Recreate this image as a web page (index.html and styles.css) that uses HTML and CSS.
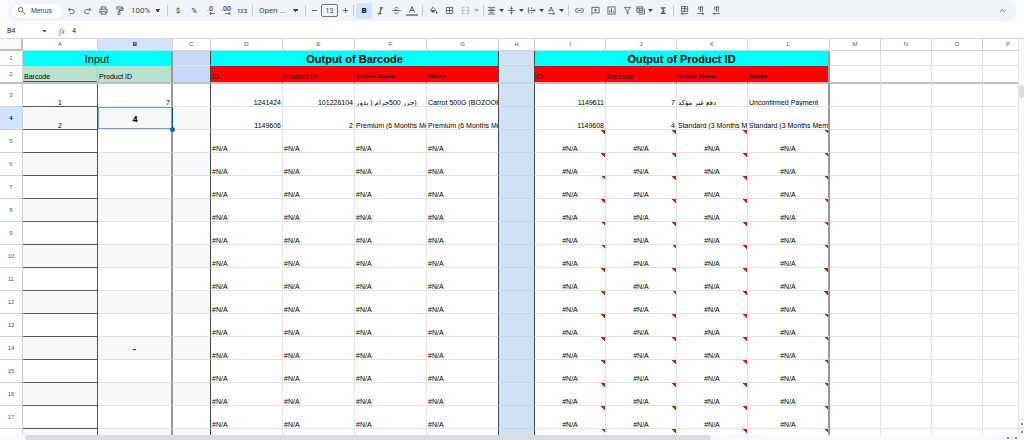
FILE: index.html
```html
<!DOCTYPE html>
<html lang="en">
<head>
    <meta charset="UTF-8">
    <meta name="viewport" content="width=device-width, initial-scale=1.0">
    <title>Barcode / Product ID Lookup</title>
    <link rel="stylesheet" href="styles.css">
</head>
<body>

<div class="toolbar-wrap">
    <div class="toolbar">
        <button class="menus-btn">
            <svg class="icon" viewBox="0 0 20 20"><circle cx="8" cy="8" r="5"/><path d="M12 12l6 6"/></svg>
            Menus
        </button>
        <button class="tool" aria-label="Undo"><svg class="icon" viewBox="0 0 20 20"><path d="M7 4L3 8l4 4M3 8h9a4 4 0 0 1 0 9H6"/></svg></button>
        <button class="tool" aria-label="Redo"><svg class="icon" viewBox="0 0 20 20"><path d="M13 4l4 4-4 4M17 8H8a4 4 0 0 0 0 9h6"/></svg></button>
        <button class="tool" aria-label="Print"><svg class="icon" viewBox="0 0 20 20"><path d="M5 7V2h10v5M5 15H2V7h16v8h-3M5 12h10v6H5z"/></svg></button>
        <button class="tool" aria-label="Paint format"><svg class="icon" viewBox="0 0 20 20"><path d="M4 2h11v5H4zM15 4h3v6H9v3M7 13h4v6H7z"/></svg></button>
        <select class="tool-select zoom-select" aria-label="Zoom"><option>100%</option></select>
        <span class="sep"></span>
        <button class="tool" aria-label="Currency">$</button>
        <button class="tool" aria-label="Percent">%</button>
        <button class="tool decimal" aria-label="Decrease decimal places">.0<svg class="arrow" viewBox="0 0 8 4"><path d="M8 2H1M3 0L1 2l2 2"/></svg></button>
        <button class="tool decimal" aria-label="Increase decimal places">.00<svg class="arrow" viewBox="0 0 8 4"><path d="M0 2h7M5 0l2 2-2 2"/></svg></button>
        <button class="tool small" aria-label="More formats">123</button>
        <span class="sep"></span>
        <select class="tool-select font-select" aria-label="Font"><option>Open ...</option></select>
        <span class="sep"></span>
        <button class="step" aria-label="Decrease font size"><svg class="icon" viewBox="0 0 20 20"><path d="M4 10h12"/></svg></button>
        <input class="size-input" type="text" value="13" aria-label="Font size">
        <button class="step" aria-label="Increase font size"><svg class="icon" viewBox="0 0 20 20"><path d="M4 10h12M10 4v12"/></svg></button>
        <span class="sep"></span>
        <button class="tool bold active" aria-label="Bold">B</button>
        <button class="tool" aria-label="Italic"><svg class="icon" viewBox="0 0 20 20"><path class="heavy" d="M8 4h8M4 17h8M12 4L8 17"/></svg></button>
        <button class="tool" aria-label="Strikethrough"><svg class="icon" viewBox="0 0 20 20"><path d="M1 10h18M14 6c0-4-8-4-8-1 0 2 2 3 4 3M6 14c0 4 8 4 8 0"/></svg></button>
        <button class="tool" aria-label="Text color"><svg class="icon text-color" viewBox="0 0 24 20"><path d="M7 13L12 1l5 12M9 9h6"/><path class="bar" d="M0 18h24"/></svg></button>
        <span class="sep"></span>
        <button class="tool" aria-label="Fill color"><svg class="icon" viewBox="0 0 20 20"><path d="M7 1l8 8-6 6-6-6 6-6"/><path class="solid" d="M4 9h10l-5 5zM17 11c3 4 2 6 0 6s-3-2 0-6z"/></svg></button>
        <button class="tool" aria-label="Borders"><svg class="icon" viewBox="0 0 20 20"><path d="M3 3h14v14H3zM10 3v14M3 10h14"/></svg></button>
        <button class="drop wide" aria-label="Merge cells" disabled><svg class="icon" viewBox="0 0 20 20"><path d="M8 3H3v4M12 3h5v4M8 17H3v-4M12 17h5v-4M1 10h6M5 8l2 2-2 2M19 10h-6M15 8l-2 2 2 2"/></svg><i class="caret"></i></button>
        <span class="sep"></span>
        <button class="drop" aria-label="Horizontal align"><svg class="icon" viewBox="0 0 20 20"><path d="M2 3h16M5 7h10M2 10h16M5 14h10M2 18h16"/></svg><i class="caret"></i></button>
        <button class="drop" aria-label="Vertical align"><svg class="icon" viewBox="0 0 20 20"><path d="M2 10h16M10 1v6M7 5l3 3 3-3M10 19v-6M7 15l3-3 3 3"/></svg><i class="caret"></i></button>
        <button class="drop" aria-label="Text wrapping"><svg class="icon" viewBox="0 0 20 20"><path d="M3 3v14M10 3v4M10 13v4M5 10h13M15 7l3 3-3 3"/></svg><i class="caret"></i></button>
        <button class="drop" aria-label="Text rotation"><svg class="icon" viewBox="0 0 20 20"><path d="M4 13L9 2l5 11M6 9h6M2 17h15M14 14l3 3-3 3"/></svg><i class="caret"></i></button>
        <span class="sep"></span>
        <button class="tool" aria-label="Insert link"><svg class="icon" viewBox="0 0 20 20"><path d="M8 6H5a4 4 0 0 0 0 8h3M12 6h3a4 4 0 0 1 0 8h-3M6 10h8"/></svg></button>
        <button class="tool" aria-label="Insert comment"><svg class="icon" viewBox="0 0 20 20"><path d="M2 3h16v12H6l-4 4zM10 6v6M7 9h6"/></svg></button>
        <button class="tool" aria-label="Insert chart"><svg class="icon" viewBox="0 0 20 20"><path d="M2 2h16v16H2zM6 9v6M10 5v10M14 11v4"/></svg></button>
        <button class="tool" aria-label="Create a filter"><svg class="icon" viewBox="0 0 20 20"><path d="M3 3h14l-6 7v7H9v-7z"/></svg></button>
        <button class="drop" aria-label="Filter views"><svg class="icon" viewBox="0 0 20 20"><path d="M2 2h13v12H2zM2 6h13M7 6v8M7 10h8M6 18h13V6"/></svg><i class="caret"></i></button>
        <button class="tool" aria-label="Functions"><svg class="icon" viewBox="0 0 20 20"><path class="heavy" d="M15 4H6l5 6-5 6h9"/></svg></button>
        <span class="sep"></span>
        <button class="tool" aria-label="Sheet direction"><svg class="icon" viewBox="0 0 20 20"><path d="M3 1h14v11H3zM10 1v11M3 6h14M18 17H3M6 14l-3 3 3 3"/></svg></button>
        <button class="tool" aria-label="Left to right"><svg class="icon" viewBox="0 0 20 20"><path d="M16 2H8a3 3 0 0 0 0 6h2M10 2v11M14 2v11M2 17h15M14 14l3 3-3 3"/></svg></button>
        <button class="tool" aria-label="Right to left"><svg class="icon" viewBox="0 0 20 20"><path d="M16 2H8a3 3 0 0 0 0 6h2M10 2v11M14 2v11M18 17H3M6 14l-3 3 3 3"/></svg></button>
        <button class="tool collapse" aria-label="Hide the menus"><svg class="icon" viewBox="0 0 20 20"><path d="M5 13l5-5 5 5"/></svg></button>
    </div>
</div>

<div class="formula-bar">
    <input class="name-box" type="text" value="B4" aria-label="Name box">
    <i class="caret"></i>
    <label class="fx" for="formula">fx</label>
    <input class="formula" id="formula" type="text" value="4">
</div>

<div class="main">
    <div class="sheet">
        <table id="sheetTable">
            <colgroup>
                <col class="w-head"><col class="w-a"><col class="w-b"><col class="w-c">
                <col class="w-out"><col class="w-out"><col class="w-out"><col class="w-out">
                <col class="w-h">
                <col class="w-prod"><col class="w-prod"><col class="w-prod"><col class="w-l">
                <col class="w-rest"><col class="w-rest"><col class="w-rest"><col class="w-rest">
            </colgroup>
            <thead>
                <tr>
                    <th class="corner"></th>
                    <th>A</th><th class="selected">B</th><th>C</th><th>D</th><th>E</th><th>F</th><th>G</th><th>H</th>
                    <th>I</th><th>J</th><th>K</th><th>L</th><th>M</th><th>N</th><th>O</th><th>P</th>
                </tr>
            </thead>
            <tbody>
                <tr class="title-row">
                    <th>1</th>
                    <td class="title thick-right" colspan="2">Input</td>
                    <td class="blue dark-right"></td>
                    <td class="title strong dark-right" colspan="4">Output of Barcode</td>
                    <td class="col-h"></td>
                    <td class="title strong thick-right" colspan="4">Output of Product ID</td>
                    <td></td><td></td><td></td><td></td>
                </tr>
                <tr class="label-row">
                    <th>2</th>
                    <td class="green underline">Barcode</td>
                    <td class="green thick-right">Product ID</td>
                    <td class="blue dark-right"></td>
                    <td class="red">ID</td>
                    <td class="red">Product ID</td>
                    <td class="red name">Arabic Name</td>
                    <td class="red name dark-right">Name</td>
                    <td class="col-h"></td>
                    <td class="red">ID</td>
                    <td class="red">Barcode</td>
                    <td class="red name">Arabic Name</td>
                    <td class="red name thick-right">Name</td>
                    <td></td><td></td><td></td><td></td>
                </tr>
                <tr>
                    <th>3</th>
                    <td class="col-a">1</td>
                    <td class="num thick-right">7</td>
                    <td class="dark-right"></td>
                    <td class="num">1241424</td>
                    <td class="num">101226104</td>
                    <td class="arabic"><bdi>جزر 500جرام ( بذور</bdi>)</td>
                    <td class="dark-right">Carrot 500G (BOZOOR</td>
                    <td class="col-h"></td>
                    <td class="num">1149611</td>
                    <td class="num">7</td>
                    <td class="arabic">دفع غير مؤكد</td>
                    <td class="thick-right">Unconfirmed Payment</td>
                    <td></td><td></td><td></td><td></td>
                </tr>
                <tr class="banded">
                    <th class="selected">4</th>
                    <td class="col-a">2</td>
                    <td class="col-b active-cell">4<span class="fill-handle"></span></td>
                    <td class="dark-right"></td>
                    <td class="num">1149606</td>
                    <td class="num">2</td>
                    <td>Premium (6 Months Me</td>
                    <td class="dark-right">Premium (6 Months Me</td>
                    <td class="col-h"></td>
                    <td class="num">1149608</td>
                    <td class="num">4</td>
                    <td>Standard (3 Months Me</td>
                    <td class="thick-right">Standard (3 Months Memb</td>
                    <td></td><td></td><td></td><td></td>
                </tr>
            </tbody>
        </table>
    </div>
    <div class="v-scroll">
        <div class="v-thumb"></div>
        <div class="v-arrows"><span class="arrow-btn up"></span><span class="arrow-btn down"></span></div>
    </div>
</div>
<div class="h-scroll">
    <div class="h-thumb"></div>
    <div class="h-arrows"><span class="arrow-btn left"></span><span class="arrow-btn right"></span></div>
</div>

<script>
    // Rows without a match: every lookup column shows #N/A
    const tbody = document.querySelector("#sheetTable tbody");
    const inputB = { 14: "-" };

    for (let row = 5; row <= 18; row++) {
        // row 18 is only a sliver above the scrollbar
        const value = row < 18 ? "#N/A" : "";
        const tr = document.createElement("tr");
        if (row % 2 === 0) {
            tr.className = "banded";
        }
        let html = "<th>" + (row < 18 ? row : "") + "</th>";
        html += '<td class="col-a"></td>';
        html += '<td class="col-b thick-right">' + (inputB[row] || "") + "</td>";
        html += '<td class="dark-right"></td>';
        html += ("<td>" + value + "</td>").repeat(3);
        html += '<td class="dark-right">' + value + "</td>";
        html += '<td class="col-h"></td>';
        html += ('<td class="error">' + value + "</td>").repeat(3);
        html += '<td class="error thick-right">' + value + "</td>";
        html += "<td></td><td></td><td></td><td></td>";
        tr.innerHTML = html;
        tbody.appendChild(tr);
    }
</script>

</body>
</html>
```

FILE: styles.css
```css
* {
    box-sizing: border-box;
}

body {
    margin: 0;
    height: 100vh;
    display: flex;
    flex-direction: column;
    overflow: hidden;
    font-family: "Liberation Sans", Arial, sans-serif;
    font-size: 7px;
    color: #000;
    background: #fff;
}

button, input, select {
    font-family: Roboto, Arial, sans-serif;
    font-size: 7px;
    color: #444746;
    background: none;
    border: none;
    padding: 0;
    margin: 0;
    outline: none;
}

/* toolbar */
.toolbar-wrap {
    background: #f9fbfd;
    padding: 0 8px 3px;
}

.toolbar {
    display: flex;
    align-items: center;
    height: 21px;
    padding: 0 6px 0 4px;
    background: #f0f4f9;
    border-radius: 11px;
}

.menus-btn {
    display: flex;
    align-items: center;
    gap: 5px;
    width: 50px;
    height: 14px;
    padding-left: 5px;
    margin-right: 1px;
    background: #fff;
    border-radius: 7px;
}

.icon {
    display: block;
    flex: none;
    width: 9px;
    height: 9px;
    fill: none;
    stroke: #5a5d5c;
    stroke-width: 2;
}

.icon.text-color {
    width: 12px;
    height: 10px;
}

.icon .heavy {
    stroke-width: 3;
}

.icon .bar {
    stroke: #5f7390;
    stroke-width: 3;
}

.icon .solid {
    fill: #444746;
    stroke: none;
}

.tool {
    display: flex;
    flex: none;
    align-items: center;
    justify-content: center;
    width: 16px;
    height: 16px;
    border-radius: 2px;
    font-weight: 500;
}

.tool.active {
    background: #d3e3fd;
    color: #041e49;
}

.tool.bold {
    font-size: 8px;
    font-weight: 900;
}

.tool.small {
    font-size: 6px;
}

.decimal {
    flex-direction: column;
    line-height: 6px;
}

.arrow {
    width: 6px;
    height: 3px;
    align-self: flex-end;
    margin-right: 3px;
    fill: none;
    stroke: #444746;
}

.tool-select {
    appearance: none;
    flex: none;
    height: 14px;
    padding-left: 4px;
    font-size: 8px;
    background: linear-gradient(to bottom left, #444746 50%, transparent 50%) no-repeat, linear-gradient(to bottom right, #444746 50%, transparent 50%) no-repeat;
    background-size: 3px 3px;
    background-position: right 7px center, right 4px center;
}

.zoom-select {
    width: 38px;
}

.font-select {
    width: 48px;
}

.sep {
    flex: none;
    width: 1px;
    height: 11px;
    margin: 0 2px;
    background: #c7cad0;
}

.step {
    display: flex;
    align-items: center;
    justify-content: center;
    width: 12px;
    height: 16px;
}

.size-input {
    width: 17px;
    height: 13px;
    margin: 0 1px;
    border: 1px solid #747775;
    border-radius: 2px;
    text-align: center;
}

.drop {
    display: flex;
    flex: none;
    align-items: center;
    justify-content: space-between;
    width: 20px;
    height: 16px;
    padding: 0 2px 0 1px;
}

.drop.wide {
    width: 24px;
    padding-left: 4px;
}

.drop:disabled {
    opacity: 0.4;
}

.caret {
    flex: none;
    width: 5px;
    height: 3px;
    background: #444746;
    clip-path: polygon(0 0, 100% 0, 50% 100%);
}

.collapse {
    margin-left: auto;
}

/* formula bar */
.formula-bar {
    display: flex;
    align-items: center;
    height: 15px;
    padding-left: 7px;
    border-bottom: 1px solid #d5d7da;
}

.name-box {
    width: 35px;
    color: #202124;
}

.fx {
    width: 10px;
    margin: 0 3px 0 12px;
    font-family: "Liberation Serif", serif;
    font-size: 8px;
    font-style: italic;
    color: #5f6368;
}

.formula {
    flex: 1;
    color: #202124;
}

/* sheet */
.main {
    flex: 1;
    min-height: 0;
    display: flex;
}

.sheet {
    flex: 1;
    min-width: 0;
    overflow: hidden;
}

table {
    width: 1031px;
    table-layout: fixed;
    border-collapse: separate;
    border-spacing: 0;
}

.w-head { width: 23px; }
.w-a { width: 75px; }
.w-b { width: 75px; }
.w-c { width: 38px; }
.w-out { width: 72px; }
.w-h { width: 36px; }
.w-prod { width: 71px; }
.w-l { width: 82px; }
.w-rest { width: 51px; }

th, td {
    height: 23px;
    padding: 0 1px;
    border-right: 1px solid #e2e3e3;
    border-bottom: 1px solid #e2e3e3;
    line-height: 7px;
    white-space: nowrap;
    overflow: hidden;
}

td {
    text-align: left;
    vertical-align: bottom;
}

th {
    font-size: 6px;
    font-weight: normal;
    text-align: center;
    vertical-align: middle;
    color: #575b5f;
    border-color: #d0d3d6;
}

thead th {
    height: 12px;
}

th.corner {
    background: #f8f9fa;
    border-right: 2px solid #c0c0c0;
    border-bottom: 2px solid #c0c0c0;
}

th.selected {
    background: #d3e3fd;
    color: #041e49;
    font-weight: bold;
}

.title-row > * {
    height: 15px;
}

.title-row .title {
    padding-top: 2px;
    background: #00ffff;
    border-bottom-color: #00ffff;
    font-size: 11px;
    line-height: 12px;
    text-align: center;
    vertical-align: middle;
}

.title-row .strong {
    font-weight: bold;
}

/* frozen rows end here */
.label-row > * {
    height: 18px;
    border-bottom: 2px solid #c0c0c0;
}

.label-row td {
    padding-bottom: 2px;
}

.green {
    background: #b7e1cd;
    border-right-color: #a5d0bb;
}

.underline {
    box-shadow: inset 0 -1px #555;
}

.blue {
    background: #c9daf8;
}

.red {
    background: #ff0000;
    border-right-color: #e00000;
    color: #400000;
}

.red.name {
    font-family: "Open Sans", sans-serif;
    font-size: 6px;
    font-weight: bold;
}

.col-h {
    background: #cfe2f3;
    border-right-color: #444;
    border-bottom-color: #c3d5e6;
}

.col-a {
    text-align: center;
    border-right-color: #555;
    border-bottom-color: #555;
}

.col-b {
    text-align: center;
    vertical-align: middle;
    font-family: "Open Sans", sans-serif;
    font-size: 9px;
    font-weight: bold;
}

.banded td:nth-child(-n+4) {
    background: #f6f8f9;
}

.num {
    text-align: right;
}

.arabic {
    font-family: "Liberation Sans", "DejaVu Sans", sans-serif;
}

.dark-right {
    border-right-color: #444;
}

.thick-right {
    border-right: 2px solid #999;
}

.error {
    text-align: center;
    background: linear-gradient(to bottom left, #d01c0c 50%, transparent 50%) no-repeat right top / 4px 4px;
}

.active-cell {
    position: relative;
    overflow: visible;
    border-right: 1px solid #0b57a4;
    box-shadow: inset 0 0 0 1px #6ba0e8;
}

.fill-handle {
    position: absolute;
    right: -3px;
    bottom: -3px;
    z-index: 1;
    width: 5px;
    height: 5px;
    border-radius: 50%;
    background: #0b66b0;
}

/* scrollbars */
.v-scroll {
    display: flex;
    flex-direction: column;
    justify-content: space-between;
    width: 6px;
    padding-top: 46px;
    border-left: 1px solid #e2e3e3;
    background: #f8f9fa;
}

.v-thumb {
    height: 13px;
    border-radius: 3px;
    background: #dadce0;
}

.v-arrows {
    display: flex;
    flex-direction: column;
}

.h-scroll {
    display: flex;
    justify-content: space-between;
    height: 5px;
    padding: 0 5px 0 25px;
    background: #f8f9fa;
}

.h-thumb {
    width: 69%;
    border-radius: 3px;
    background: #dadce0;
}

.h-arrows {
    display: flex;
}

.arrow-btn {
    width: 8px;
    height: 5px;
    border-left: 1px solid #e2e3e3;
    background: linear-gradient(#80868b, #80868b) no-repeat center / 2px 2px;
}

.v-arrows .arrow-btn {
    width: 5px;
    height: 8px;
    border-left: none;
    border-top: 1px solid #e2e3e3;
}
```
